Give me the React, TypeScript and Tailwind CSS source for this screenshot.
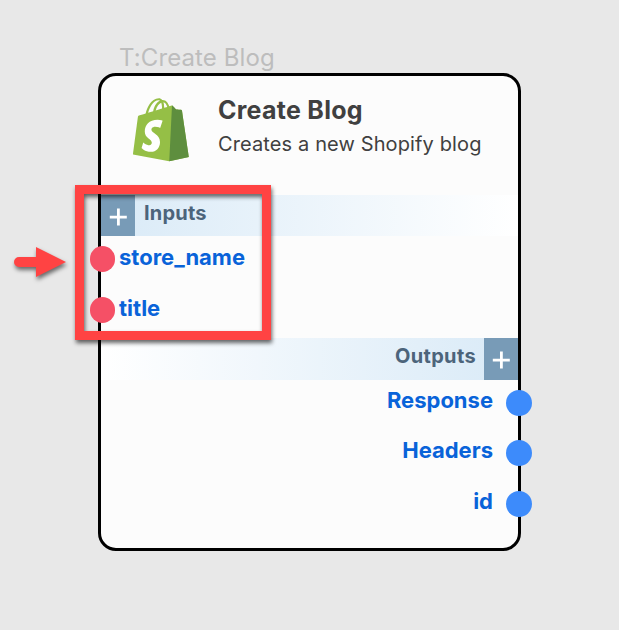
import React from "react";

function ShopifyLogo() {
  return (
    <svg viewBox="0 0 256 292" preserveAspectRatio="none" className="mt-[1px] h-[63.5px] w-[56px]">
      <path fill="#95BF46" d="M223.774 57.34c-.201-1.46-1.48-2.268-2.537-2.357-1.055-.088-23.383-1.743-23.383-1.743s-15.507-15.395-17.209-17.099c-1.703-1.703-5.029-1.185-6.32-.805-.19.056-3.388 1.043-8.678 2.68-5.18-14.906-14.322-28.604-30.405-28.604-.444 0-.901.018-1.358.044C129.31 3.407 123.644.779 118.75.779c-37.465 0-55.364 46.835-60.976 70.635-14.558 4.511-24.9 7.718-26.221 8.133-8.126 2.549-8.383 2.805-9.45 10.462C21.3 95.806.038 260.235.038 260.235l165.678 31.042 89.77-19.42S223.973 58.8 223.775 57.34zM156.49 40.848l-14.019 4.339c.005-.988.01-1.96.01-3.023 0-9.264-1.286-16.723-3.349-22.636 8.287 1.04 13.806 10.469 17.358 21.32zm-27.638-19.483c2.304 5.773 3.802 14.058 3.802 25.238 0 .572-.005 1.095-.01 1.624-9.117 2.824-19.024 5.89-28.953 8.966 5.575-21.516 16.025-31.908 25.161-35.828zm-11.131-10.537c1.617 0 3.246.549 4.805 1.622-12.007 5.65-24.877 19.88-30.312 48.297l-22.886 7.088C75.694 46.16 90.81 10.828 117.72 10.828z" />
      <path fill="#5E8E3E" d="M221.237 54.983c-1.055-.088-23.383-1.743-23.383-1.743s-15.507-15.395-17.209-17.099c-.637-.634-1.496-.959-2.394-1.099l-12.527 256.233 89.762-19.418S223.972 58.8 223.774 57.34c-.201-1.46-1.48-2.268-2.537-2.357" />
      <path fill="#FFF" d="M135.242 104.585l-11.069 32.926s-9.698-5.176-21.586-5.176c-17.428 0-18.305 10.937-18.305 13.693 0 15.038 39.2 20.8 39.2 56.024 0 27.713-17.577 45.558-41.277 45.558-28.44 0-42.984-17.7-42.984-17.7l7.615-25.16s14.95 12.835 27.565 12.835c8.243 0 11.596-6.49 11.596-11.232 0-19.616-32.16-20.491-32.16-52.724 0-27.129 19.472-53.382 58.778-53.382 15.145 0 22.627 4.338 22.627 4.338" />
    </svg>
  );
}

function AddButton() {
  return (
    <button className="flex h-full w-[34px] items-center justify-center bg-[#789bb7]">
      <svg viewBox="0 0 18 18" className="mt-[2px] h-[18px] w-[18px]" stroke="#fff" strokeWidth="2.8">
        <path d="M9.4 .5v17M.8 9.2h17" />
      </svg>
    </button>
  );
}

function InputRow({ name }: { name: string }) {
  return (
    <div className="-ml-[11px] flex h-[50.4px] items-start">
      <span className="h-[26px] w-[25px] shrink-0 rounded-full bg-[#f55066]" />
      <span className="ml-[4px] text-[22px] leading-[22px] font-bold text-[#0963d9]">{name}</span>
    </div>
  );
}

function OutputRow({ name }: { name: string }) {
  return (
    <div className="-mr-[14px] flex h-[50.5px] items-start justify-end">
      <span className="mr-[13px] text-[22px] leading-[21px] font-bold text-[#0963d9]">{name}</span>
      <span className="h-[26px] w-[26px] shrink-0 rounded-full bg-[#3d8bfb]" />
    </div>
  );
}

export default function App() {
  return (
    <div className="relative h-[630px] w-[619px] overflow-hidden bg-[#e8e8e8] pt-[46px] pl-[98px] font-['Inter',sans-serif]">
      <div className="h-[27px] pl-[21px] text-[24px] leading-[24px] tracking-[0.1px] whitespace-nowrap text-[#bdbdbd]">T:Create Blog</div>

      <div className="h-[478px] w-[423px] rounded-[18px] border-[3px] border-black bg-[#fcfcfc]">
        <header className="flex h-[119px] pt-[21px] pl-[32px]">
          <ShopifyLogo />
          <div className="ml-[29px] whitespace-nowrap text-[#404040]">
            <h1 className="text-[25px] leading-[27px] font-bold tracking-[0.27px]">Create Blog</h1>
            <p className="mt-[8px] text-[20px] leading-[24px] tracking-[0.12px]">Creates a new Shopify blog</p>
          </div>
        </header>

        <div className="flex h-[41px] bg-linear-to-r from-[#d9eaf7] to-white">
          <AddButton />
          <span className="pt-[7px] pl-[9px] text-[20px] leading-[22px] font-bold tracking-[0.2px] text-[#4c647b]">Inputs</span>
        </div>
        <div className="h-[102px] pt-[10.4px]">
          <InputRow name="store_name" />
          <InputRow name="title" />
        </div>

        <div className="flex h-[42px] justify-end bg-linear-to-l from-[#d9eaf7] to-white">
          <span className="pt-[7px] pr-[8px] text-[20px] leading-[22px] font-bold tracking-[0.35px] text-[#4c647b]">Outputs</span>
          <AddButton />
        </div>
        <div className="pt-[9.7px]">
          <OutputRow name="Response" />
          <OutputRow name="Headers" />
          <OutputRow name="id" />
        </div>
      </div>

      {/* Callout drawn over the node's inputs */}
      <div className="absolute top-[185px] left-[75px] h-[155px] w-[196px] border-[9px] border-[#ff4343] drop-shadow-[1px_3px_2px_rgba(0,0,0,0.6)]" />
      <svg viewBox="0 0 54 32" className="absolute top-[246px] left-[13px] h-[32px] w-[54px] overflow-visible drop-shadow-[1px_3px_2px_rgba(0,0,0,0.55)]">
        <path fill="#ff4343" d="M6 11h17V1l30 15-30 15V21H6a5 5 0 0 1 0-10z" />
      </svg>
    </div>
  );
}
